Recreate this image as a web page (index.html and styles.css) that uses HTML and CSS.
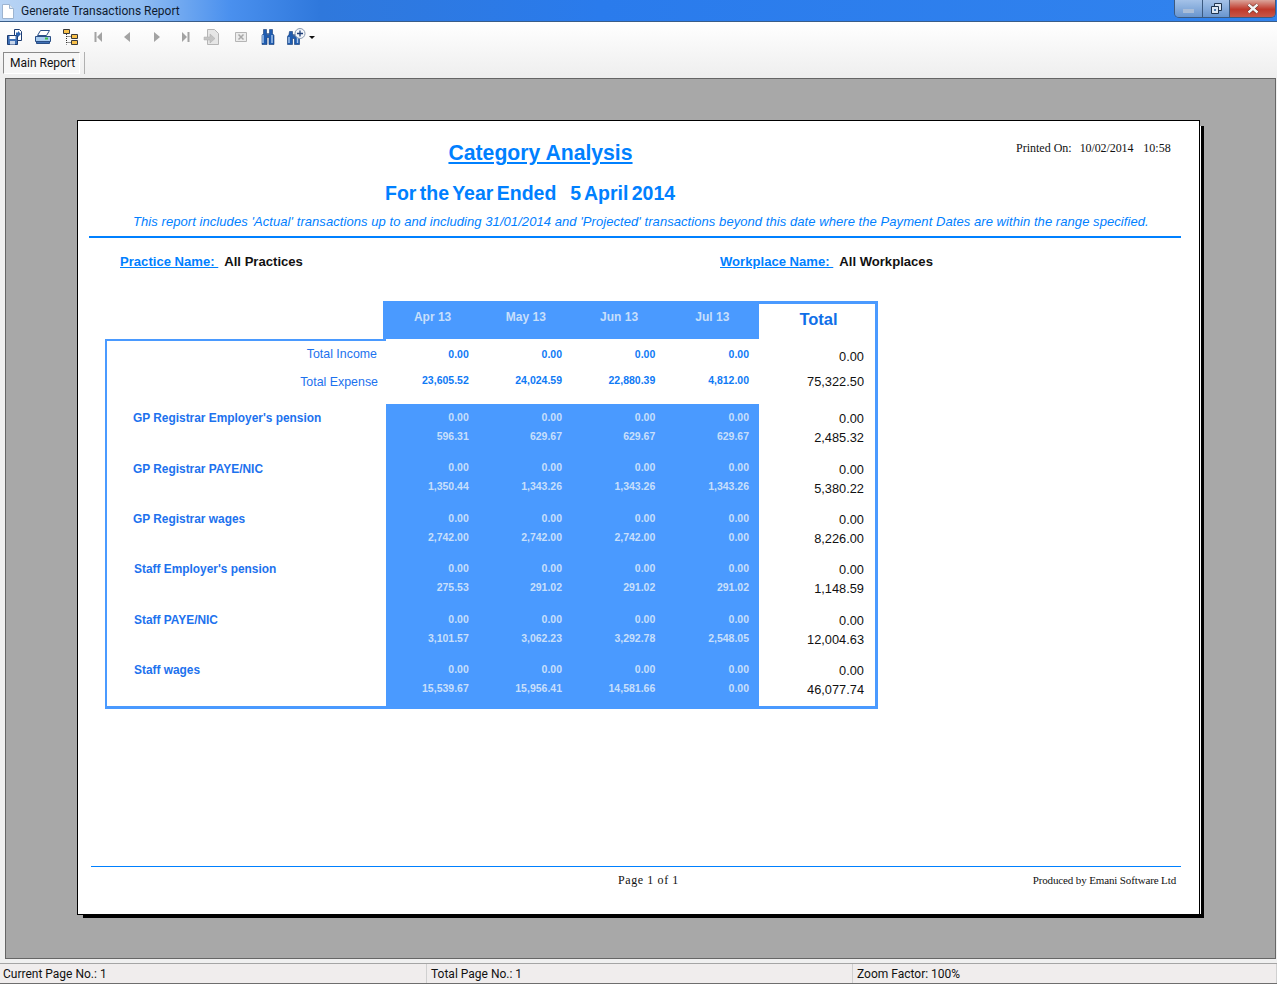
FILE: index.html
```html
<!DOCTYPE html>
<html>

<head>
    <title>Generate Transactions Report</title>
    <link rel="stylesheet" href="styles.css">
</head>

<body>
    <div class="window">
        <div class="titlebar">
            <svg class="doc-icon" width="14" height="17" viewBox="0 0 14 17">
                <path d="M1.5 1.5h7l4 4v10h-11z" fill="#fff" stroke="#9db4d0" />
                <path d="M8.5 1.5v4h4" fill="#dfe9f5" stroke="#9db4d0" />
            </svg>
            <span class="title-text">Generate Transactions Report</span>
            <div class="win-buttons">
                <div class="win-btn min"><span class="min-bar"></span></div>
                <div class="win-btn max">
                    <svg width="11" height="11" viewBox="0 0 11 11">
                        <path d="M3.5 .5h7v7h-7z" fill="#dbe6f3" stroke="#1f3550" />
                        <path d="M.5 3.500h7v7h-7z" fill="#dbe6f3" stroke="#1f3550" />
                        <path d="M3 6h2v2h-2z" fill="#4a7ab0" />
                    </svg>
                </div>
                <div class="win-btn close">
                    <svg width="14" height="11" viewBox="0 0 14 11">
                        <path d="M2.500 1.500l9 8M11.500 1.500l-9 8" stroke="#5a1c14" stroke-width="3.600" />
                        <path d="M2.500 1.500l9 8M11.500 1.500l-9 8" stroke="#f4f4f4" stroke-width="2.400" />
                    </svg>
                </div>
            </div>
        </div>

        <div class="toolbar">
            <svg class="tool tool-first" width="18" height="18" viewBox="0 0 18 18">
                <path d="M1.500 7.500h10v9h-10z" fill="#3d6fb5" stroke="#1d3d73" />
                <path d="M3.500 8h6v3h-6z" fill="#fff" />
                <path d="M4 13h5v3.500H4z" fill="#c8d6ea" />
                <path d="M8.500 1.500h5l2 2v9h-4v-5h-3z" fill="#fff" stroke="#1d3d73" />
                <path d="M10 4.500h2V3l3 3-3 3V7.500h-2z" fill="#2a62b0" />
            </svg>
            <svg class="tool" width="18" height="18" viewBox="0 0 18 18">
                <path d="M6.500 2.500h9l-3 5h-9z" fill="#fff" stroke="#2a4f86" />
                <path d="M1.500 8.500h15v5h-15z" fill="#a9cdf0" stroke="#2a4f86" />
                <path d="M2.500 13.500h13v2h-13z" fill="#3d6fb5" stroke="#2a4f86" />
                <path d="M11 9.500h3v2h-3z" fill="#3fc04a" />
            </svg>
            <svg class="tool" width="18" height="18" viewBox="0 0 18 18">
                <path d="M1.500 1.500h6v4h-6z" fill="#f7c04a" stroke="#3a3a3a" />
                <path d="M9.500 6.500h6v4h-6z" fill="#f7c04a" stroke="#3a3a3a" />
                <path d="M9.500 12.500h6v4h-6z" fill="#f7c04a" stroke="#3a3a3a" />
                <path d="M4.500 6v10.500M4.500 8.500h5M4.500 14.500h5" stroke="#333" stroke-dasharray="1 1" fill="none" />
            </svg>
            <svg class="nav nav-first" width="10" height="12" viewBox="0 0 10 12">
                <path d="M1.500 1v10" stroke="#a3a3a3" stroke-width="2" />
                <path d="M8 1v10L3 6z" fill="#a3a3a3" />
            </svg>
            <svg class="nav nav-prev" width="10" height="12" viewBox="0 0 10 12">
                <path d="M8 1v10L2 6z" fill="#a3a3a3" />
            </svg>
            <svg class="nav nav-next" width="10" height="12" viewBox="0 0 10 12">
                <path d="M2 1v10l6-5z" fill="#a3a3a3" />
            </svg>
            <svg class="nav nav-last" width="10" height="12" viewBox="0 0 10 12">
                <path d="M2 1v10l5-5z" fill="#a3a3a3" />
                <path d="M8.500 1v10" stroke="#a3a3a3" stroke-width="2" />
            </svg>
            <svg class="tool tool-export" width="18" height="18" viewBox="0 0 18 18">
                <path d="M4.500 1.500h7l4 4v11h-11z" fill="#e6e6e6" stroke="#b5b5b5" />
                <path d="M1 9h6V6l5 4.500-5 4.500v-3H1z" fill="#c4c4c4" stroke="#adadad" stroke-width=".5" />
            </svg>
            <svg class="tool tool-stop" width="14" height="14" viewBox="0 0 14 14">
                <path d="M1.500 2.500h11v9h-11z" fill="#ececec" stroke="#b5b5b5" />
                <path d="M4.500 4.500l5 5M9.500 4.500l-5 5" stroke="#a8a8a8" stroke-width="1.500" />
            </svg>
            <svg class="tool tool-find" width="16" height="16" viewBox="0 0 16 16">
                <path d="M3.500 .5h3v4h1v2h1v-2h1v-4h3v4l1.500 2v9h-5v-7h-2v7h-5v-9l1.500-2z" fill="#1f5cb0" stroke="#163a72" stroke-width=".6" />
                <path d="M3 6v8M12 6v8" stroke="#a9c8ee" stroke-width="1.400" />
            </svg>
            <svg class="tool tool-findmore" width="20" height="18" viewBox="0 0 20 18">
                <path d="M2.500 3.500h3v3h1v2h1v-2h1v-3h2.500v3l1.500 2v8h-5v-6h-2v6h-5v-8l1.500-2z" fill="#1f5cb0" stroke="#163a72" stroke-width=".6" />
                <path d="M2 9v6M10.500 9v6" stroke="#a9c8ee" stroke-width="1.400" />
                <circle cx="13" cy="5.500" r="5" fill="#f2f6fb" stroke="#8a9ab0" />
                <path d="M13 2.500v6M10 5.500h6" stroke="#1f3f78" stroke-width="1.300" />
            </svg>
            <span class="caret"></span>
        </div>

        <div class="tabbar">
            <div class="tab">Main Report</div>
            <span class="tab-sep"></span>
        </div>

        <div class="viewer">
            <div class="page">
                <div class="report-head">
                    <h1 class="report-title">Category Analysis</h1>
                    <div class="printed">
                        <span>Printed On:</span><span class="printed-date">10/02/2014</span><span>10:58</span>
                    </div>
                </div>
                <h2 class="report-year"><span>For the Year Ended</span><span>5 April 2014</span></h2>
                <p class="report-note">This report includes 'Actual' transactions up to and including 31/01/2014 and 'Projected' transactions beyond this date where the Payment Dates are within the range specified.</p>

                <div class="filters">
                    <div class="filter filter-practice"><u>Practice Name:&nbsp;</u><b>All Practices</b></div>
                    <div class="filter"><u>Workplace Name:&nbsp;</u><b>All Workplaces</b></div>
                </div>

                <div class="matrix">
                    <div class="months">
                        <div>Apr 13</div>
                        <div>May 13</div>
                        <div>Jun 13</div>
                        <div>Jul 13</div>
                    </div>
                    <div class="total-head">Total</div>

                    <div class="summary-labels">
                        <div class="label-income">Total Income</div>
                        <div class="label-expense">Total Expense</div>
                    </div>
                    <div class="summary-values">
                        <div class="vals">
                            <span>0.00</span><span>0.00</span><span>0.00</span><span>0.00</span>
                        </div>
                        <div class="vals">
                            <span>23,605.52</span><span>24,024.59</span><span>22,880.39</span><span>4,812.00</span>
                        </div>
                    </div>
                    <div class="summary-totals">
                        <div>0.00</div>
                        <div>75,322.50</div>
                    </div>

                    <div class="cat-labels">
                        <div>GP Registrar Employer's pension</div>
                        <div>GP Registrar PAYE/NIC</div>
                        <div>GP Registrar wages</div>
                        <div class="staff">Staff Employer's pension</div>
                        <div class="staff">Staff PAYE/NIC</div>
                        <div class="staff">Staff wages</div>
                    </div>
                    <div class="cat-values">
                        <div class="cat">
                            <div class="vals"><span>0.00</span><span>0.00</span><span>0.00</span><span>0.00</span></div>
                            <div class="vals"><span>596.31</span><span>629.67</span><span>629.67</span><span>629.67</span></div>
                        </div>
                        <div class="cat">
                            <div class="vals"><span>0.00</span><span>0.00</span><span>0.00</span><span>0.00</span></div>
                            <div class="vals"><span>1,350.44</span><span>1,343.26</span><span>1,343.26</span><span>1,343.26</span></div>
                        </div>
                        <div class="cat">
                            <div class="vals"><span>0.00</span><span>0.00</span><span>0.00</span><span>0.00</span></div>
                            <div class="vals"><span>2,742.00</span><span>2,742.00</span><span>2,742.00</span><span>0.00</span></div>
                        </div>
                        <div class="cat">
                            <div class="vals"><span>0.00</span><span>0.00</span><span>0.00</span><span>0.00</span></div>
                            <div class="vals"><span>275.53</span><span>291.02</span><span>291.02</span><span>291.02</span></div>
                        </div>
                        <div class="cat">
                            <div class="vals"><span>0.00</span><span>0.00</span><span>0.00</span><span>0.00</span></div>
                            <div class="vals"><span>3,101.57</span><span>3,062.23</span><span>3,292.78</span><span>2,548.05</span></div>
                        </div>
                        <div class="cat">
                            <div class="vals"><span>0.00</span><span>0.00</span><span>0.00</span><span>0.00</span></div>
                            <div class="vals"><span>15,539.67</span><span>15,956.41</span><span>14,581.66</span><span>0.00</span></div>
                        </div>
                    </div>
                    <div class="cat-totals">
                        <div class="cat"><div>0.00</div><div>2,485.32</div></div>
                        <div class="cat"><div>0.00</div><div>5,380.22</div></div>
                        <div class="cat"><div>0.00</div><div>8,226.00</div></div>
                        <div class="cat"><div>0.00</div><div>1,148.59</div></div>
                        <div class="cat"><div>0.00</div><div>12,004.63</div></div>
                        <div class="cat"><div>0.00</div><div>46,077.74</div></div>
                    </div>
                </div>

                <div class="page-footer">
                    <span class="page-no">Page 1 of 1</span>
                    <span class="produced">Produced by Emani Software Ltd</span>
                </div>
            </div>
        </div>

        <div class="statusbar">
            <div>Current Page No.: 1</div>
            <div>Total Page No.: 1</div>
            <div>Zoom Factor: 100%</div>
        </div>
    </div>
</body>

</html>
```

FILE: styles.css
```css
html,
body {
    margin: 0;
    padding: 0;
    height: 100%;
    overflow: hidden;
}

.window {
    width: 1277px;
    height: 984px;
    display: flex;
    flex-direction: column;
    background-color: #f0f0f0;
    font-family: Roboto, "Noto Sans", sans-serif;
}

/* title bar */
.titlebar {
    height: 21px;
    flex: none;
    display: flex;
    align-items: center;
    border-bottom: 1px solid #3a5d88;
    background: linear-gradient(to right, #b9d4f4 0px, #8fbcf2 140px, #4a90ee 230px, #2f78dc 320px, #2a7bec 600px, #3183ee 100%);
}

.doc-icon {
    margin-left: 1px;
    margin-top: 1px;
}

.title-text {
    margin-left: 6px;
    font-size: 12px;
    color: #101c30;
}

.win-buttons {
    display: flex;
    margin-left: auto;
    margin-right: 1px;
    height: 17px;
    align-self: flex-start;
    border: 1px solid #3c5a80;
    border-top: none;
    border-radius: 0 0 5px 5px;
    overflow: hidden;
}

.win-btn {
    height: 17px;
    display: flex;
    align-items: center;
    justify-content: center;
}

.min {
    width: 27px;
    background: linear-gradient(#a4c2e8, #6a96cf);
    border-right: 1px solid #3c5a80;
}

.min-bar {
    width: 11px;
    height: 4px;
    background-color: #a9bdd8;
    margin-top: 4px;
}

.max {
    width: 26px;
    background: linear-gradient(#a4c2e8, #6a96cf);
    border-right: 1px solid #3c5a80;
}

.close {
    width: 45px;
    background: linear-gradient(#dba59b, #c0392b 55%, #c8574a);
}

/* toolbar and tabs */
.toolbar {
    height: 26px;
    flex: none;
    box-sizing: border-box;
    padding-top: 4px;
    display: flex;
    align-items: center;
    background: linear-gradient(#ffffff, #f7f7f7);
}

.tool-first {
    margin-left: 6px;
}

.tool {
    margin-right: 10px;
}

.nav {
    margin-right: 19px;
}

.nav-first {
    margin-right: 18px;
    margin-left: 4px;
}

.nav-prev {
    margin-right: 20px;
}

.nav-next {
    margin-right: 18px;
}

.nav-last {
    margin-right: 13px;
}

.tool-export {
    margin-right: 13px;
}

.tool-stop {
    margin-right: 12px;
}

.tool-find {
    margin-right: 11px;
}

.caret {
    width: 0;
    height: 0;
    margin-left: -8px;
    border-left: 3px solid transparent;
    border-right: 3px solid transparent;
    border-top: 3px solid #111;
}

.tabbar {
    height: 30px;
    flex: none;
    display: flex;
    align-items: center;
    padding-left: 3px;
    background: linear-gradient(#f7f7f7, #eeeeee);
}

.tab {
    height: 20px;
    line-height: 20px;
    padding: 0 4px 0 6px;
    font-size: 12px;
    color: #111;
    background-color: #f6f6f6;
    border: 1px solid #8a8a8a;
    border-right-color: #fff;
    border-bottom-color: #fff;
}

.tab-sep {
    width: 1px;
    height: 22px;
    margin-left: 4px;
    background-color: #b0b0b0;
}

/* grey area behind the page */
.viewer {
    position: relative;
    z-index: 0;
    height: 881px;
    flex: none;
    margin: 0 1px 0 5px;
    padding: 41px 0 0 71px;
    box-sizing: border-box;
    background-color: #a8a8a8;
    border: 1px solid #666;
}

.page {
    position: relative;
    width: 1123px;
    height: 795px;
    box-sizing: border-box;
    background-color: #fff;
    border: 1px solid #000;
    color: #0080ff;
    font-family: "Liberation Sans", Arial, sans-serif;
}

/* drop shadow, with the thin white edge the viewer leaves beside the page */
.page::after {
    content: "";
    position: absolute;
    z-index: -1;
    left: 5px;
    top: 5px;
    width: 1121px;
    height: 792px;
    background-color: #000;
}

.page::before {
    content: "";
    position: absolute;
    left: 1122px;
    top: 5px;
    width: 1px;
    height: 788px;
    background-color: #fff;
}

.report-head {
    display: flex;
    align-items: flex-start;
}

.report-title {
    margin: 19px 0 0 0;
    width: 925px;
    text-align: center;
    font-size: 21.2px;
    line-height: 26px;
    text-decoration: underline;
}

.printed {
    display: flex;
    gap: 9px;
    margin: 20px 0 0 13px;
    font-family: "Liberation Serif", serif;
    font-size: 12px;
    color: #111;
}

.printed-date {
    margin-left: -1px;
    margin-right: 1px;
    letter-spacing: -.1px;
}

.report-year {
    margin: 14px 0 0 307px;
    display: flex;
    gap: 14px;
    font-size: 19.5px;
    line-height: 26px;
    word-spacing: -2px;
}

.report-note {
    margin: 8px 0 0 55px;
    font-size: 13px;
    line-height: 16px;
    font-style: italic;
    letter-spacing: .065px;
    white-space: nowrap;
}

.filters {
    display: flex;
    margin: 6px 0 0 11px;
    width: 1092px;
    height: 40px;
    border-top: 2px solid #0080ff;
    font-size: 13.1px;
}

.filter {
    margin-top: 15px;
    height: 18px;
    line-height: 18px;
    font-weight: bold;
}

.filter-practice {
    margin-left: 31px;
    width: 600px;
}

.filter b {
    margin-left: 6px;
    color: #111;
}

/* the figures table */
.matrix {
    display: grid;
    grid-template-columns: 281px 373px 119px;
    grid-template-rows: 38px 65px auto;
    width: 773px;
    margin: 23px 0 0 27px;
}

.months {
    grid-column: 2;
    margin-left: -3px;
    padding-left: 3px;
    display: grid;
    grid-template-columns: repeat(4, 1fr);
    background-color: #4a9aff;
    color: #c7dffb;
    font-size: 12px;
    font-weight: bold;
    line-height: 33px;
    text-align: center;
}

.total-head {
    grid-column: 3;
    box-sizing: border-box;
    padding-left: 3px;
    border-top: 3px solid #4a9aff;
    border-right: 3px solid #4a9aff;
    color: #0f6fe8;
    font-size: 16.5px;
    font-weight: bold;
    line-height: 30px;
    text-align: center;
}

.summary-labels {
    grid-column: 1;
    box-sizing: border-box;
    border-top: 2px solid #4a9aff;
    border-left: 2px solid #4a9aff;
    color: #1d72ee;
    font-size: 12.4px;
    text-align: right;
}

.label-income {
    margin-top: 5px;
    line-height: 16px;
    padding-right: 9px;
}

.label-expense {
    margin-top: 12px;
    line-height: 16px;
    padding-right: 8px;
}

.summary-values {
    padding-top: 8px;
    box-sizing: border-box;
}

.summary-values .vals {
    height: 26px;
    color: #0f7af5;
}

.vals {
    display: grid;
    grid-template-columns: repeat(4, 1fr);
    font-size: 10.5px;
    font-weight: bold;
    line-height: 14px;
    text-align: right;
}

.vals span {
    padding-right: 10.5px;
}

.vals span:last-child {
    padding-right: 10px;
}

.summary-totals,
.cat-totals {
    box-sizing: border-box;
    border-right: 3px solid #4a9aff;
    padding-right: 11px;
    color: #111;
    font-size: 12.8px;
    text-align: right;
}

.summary-totals {
    padding-top: 5px;
    line-height: 25px;
}

.cat-labels {
    box-sizing: border-box;
    height: 305px;
    padding: 7.3px 0 0 26px;
    border-left: 2px solid #4a9aff;
    border-bottom: 3px solid #4a9aff;
    color: #1d72ee;
    font-size: 11.9px;
    font-weight: bold;
}

.cat-labels div {
    height: 50.4px;
    line-height: 14px;
}

.cat-labels .staff {
    padding-left: 1px;
}

.cat-values {
    box-sizing: border-box;
    height: 305px;
    padding-top: 6px;
    background-color: #4a9aff;
    color: #c7dffb;
}

.cat-values .cat {
    height: 50.4px;
}

.cat-values .vals {
    height: 19px;
}

.cat-totals {
    height: 305px;
    padding-top: 5.3px;
    border-bottom: 3px solid #4a9aff;
}

.cat-totals .cat {
    height: 50.4px;
    line-height: 19px;
}

.page-footer {
    display: flex;
    margin: 157px 0 0 13px;
    width: 1090px;
    border-top: 1px solid #0080ff;
    font-family: "Liberation Serif", serif;
    color: #111;
}

.page-no {
    margin: 6px 0 0 527px;
    font-size: 12px;
    letter-spacing: .6px;
}

.produced {
    margin: 6px 5px 0 auto;
    font-size: 11px;
    line-height: 14px;
    letter-spacing: -.13px;
}

/* status bar */
.statusbar {
    flex: 1;
    display: grid;
    grid-template-columns: 427px 426px 1fr;
    margin-top: 4px;
    border-top: 1px solid #a5a5a5;
    border-bottom: 1px solid #6e6e6e;
    background-color: #f0eded;
    font-size: 12px;
    line-height: 18px;
    color: #111;
}

.statusbar div {
    padding-left: 4px;
    padding-top: 1px;
    border-right: 1px solid #d0d0d0;
}

.statusbar div:first-child {
    padding-left: 3px;
}
```
